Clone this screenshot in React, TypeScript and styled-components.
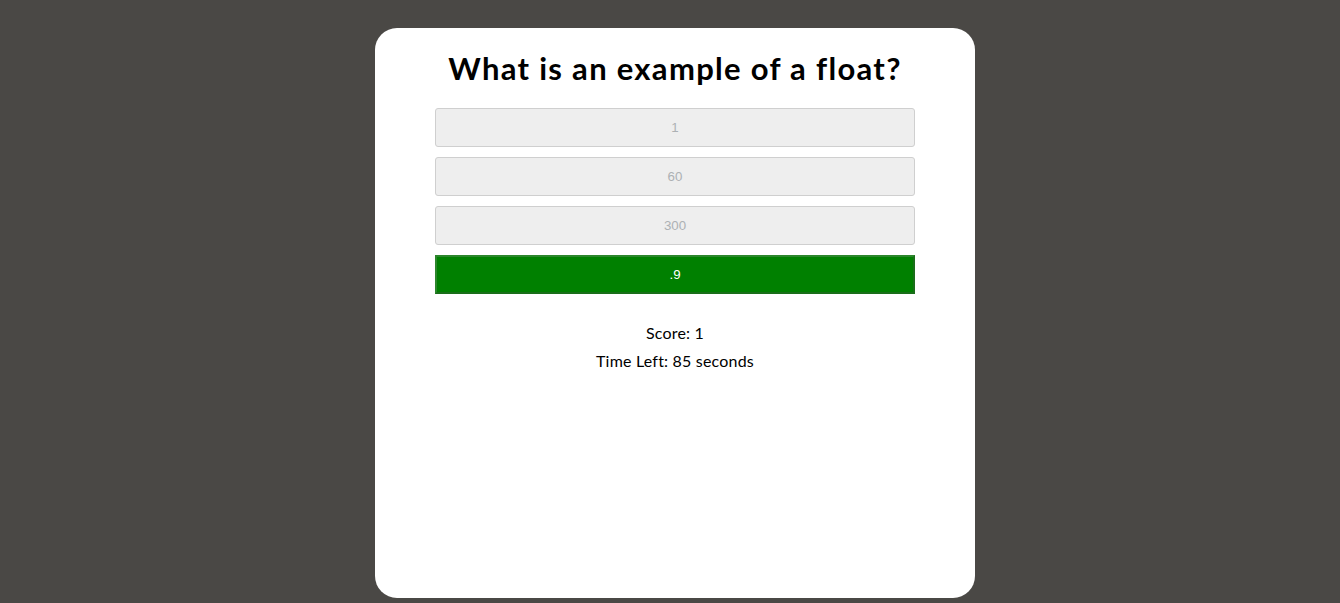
import React from "react";
import styled, { createGlobalStyle } from "styled-components";

const Global = createGlobalStyle`
  html, body { margin: 0; padding: 0; background: #4a4845; }
  body { font-family: "Trebuchet MS", Lato, sans-serif; }
`;

const Page = styled.div`
  display: flex;
  justify-content: center;
  padding: 28px 0 0 10px;
  height: 603px;
  box-sizing: border-box;
`;

const Card = styled.div`
  width: 600px;
  height: 570px;
  background: #fff;
  border-radius: 22px;
  display: flex;
  flex-direction: column;
  align-items: center;
  padding-top: 21px;
  box-sizing: border-box;
`;

const Title = styled.h1`
  margin: 0 0 20px;
  font-family: "Trebuchet MS", Lato, sans-serif;
  font-weight: bold;
  font-size: 31px;
  line-height: 39px;
  letter-spacing: 1.3px;
  color: #000;
`;

const Options = styled.div`
  display: flex;
  flex-direction: column;
  gap: 10px;
  width: 480px;
`;

const Option = styled.button<{ $correct?: boolean }>`
  height: 39px;
  width: 100%;
  border-radius: ${(p) => (p.$correct ? "0" : "3px")};
  border-style: solid;
  border-width: ${(p) => (p.$correct ? "2px" : "1px")};
  border-color: ${(p) =>
    p.$correct ? "#2c862c #1a6e1a #1a6e1a #2c862c" : "#cfcfcf"};
  background: ${(p) => (p.$correct ? "#008000" : "#eeeeee")};
  color: ${(p) => (p.$correct ? "#ffffff" : "#adb1b4")};
  font-family: "Liberation Sans", Arial, sans-serif;
  font-size: 13.3px;
  padding: 0;
  cursor: default;
`;

const Stats = styled.div`
  margin-top: 30px;
  display: flex;
  flex-direction: column;
  align-items: center;
  gap: 10px;
  font-family: "Trebuchet MS", Lato, sans-serif;
  font-size: 16px;
  line-height: 18px;
  letter-spacing: 0.2px;
  color: #000;
`;

const Stat = styled.p`
  margin: 0;
`;

export default function App() {
  return (
    <>
      <Global />
      <Page>
        <Card>
          <Title>What is an example of a float?</Title>
          <Options>
            <Option disabled>1</Option>
            <Option disabled>60</Option>
            <Option disabled>300</Option>
            <Option $correct>.9</Option>
          </Options>
          <Stats>
            <Stat>Score: 1</Stat>
            <Stat>Time Left: 85 seconds</Stat>
          </Stats>
        </Card>
      </Page>
    </>
  );
}
